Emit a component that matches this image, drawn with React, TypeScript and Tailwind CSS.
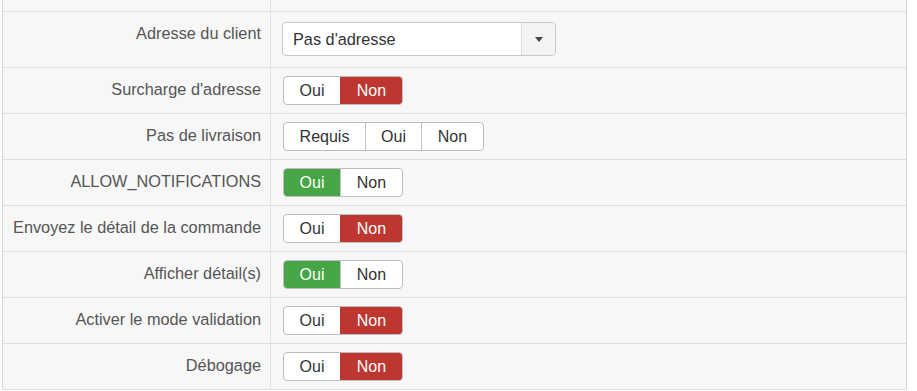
import React from 'react';

type Opt = { label: string; w: number; active?: 'red' | 'green' };

function Toggle({ options }: { options: Opt[] }) {
  return (
    <div className="flex h-[29px] rounded-[4px] border border-[#bdbdbd] overflow-hidden bg-white">
      {options.map((o, i) => (
        <div
          key={i}
          style={{ width: o.w }}
          className={
            'flex items-center justify-center text-[16px] ' +
            (i > 0 ? 'border-l border-[#c4c4c4] ' : '') +
            (o.active === 'red'
              ? 'bg-[#bd362f] text-white border-l-[#bd362f]'
              : o.active === 'green'
              ? 'bg-[#46a546] text-white'
              : 'text-[#333]')
          }
        >
          {o.label}
        </div>
      ))}
    </div>
  );
}

const ouiNon = (state: 'oui' | 'non'): Opt[] => [
  { label: 'Oui', w: 56, active: state === 'oui' ? 'green' : undefined },
  { label: 'Non', w: 62, active: state === 'non' ? 'red' : undefined },
];

const rows: { label: string; opts: Opt[] }[] = [
  { label: "Surcharge d'adresse", opts: ouiNon('non') },
  {
    label: 'Pas de livraison',
    opts: [
      { label: 'Requis', w: 81 },
      { label: 'Oui', w: 56 },
      { label: 'Non', w: 62 },
    ],
  },
  { label: 'ALLOW_NOTIFICATIONS', opts: ouiNon('oui') },
  { label: 'Envoyez le détail de la commande', opts: ouiNon('non') },
  { label: 'Afficher détail(s)', opts: ouiNon('oui') },
  { label: 'Activer le mode validation', opts: ouiNon('non') },
  { label: 'Débogage', opts: ouiNon('non') },
];

export default function App() {
  return (
    <div className="w-[917px] h-[391px] bg-white overflow-hidden font-['Liberation_Sans',Arial,sans-serif]">
      <div className="ml-[2px] w-[905px] border-l border-r border-[#d6d6d6] bg-[#f7f7f7]">
        <div className="grid grid-cols-[268px_1fr] h-[12px] border-b border-[#dedede]">
          <div className="border-r border-[#e2e2e2]" />
          <div />
        </div>

        <div className="grid grid-cols-[268px_1fr] h-[56px] border-b border-[#dedede]">
          <div className="border-r border-[#e2e2e2] text-right pr-[9px] pt-[12px] text-[16.3px] leading-[18px] text-[#555]">
            Adresse du client
          </div>
          <div className="pl-[11px] pt-[10px]">
            <div className="flex w-[274px] h-[34px] rounded-[4px] border border-[#c8c8c8] bg-white overflow-hidden">
              <div className="flex-1 flex items-center pl-[10px] text-[16.3px] text-[#333]">
                Pas d'adresse
              </div>
              <div className="w-[34px] flex items-center justify-center border-l border-[#dcdcdc] bg-[#f3f3f3]">
                <svg width="10" height="5" viewBox="0 0 10 5">
                  <path d="M1 0h8L5 5z" fill="#444" />
                </svg>
              </div>
            </div>
          </div>
        </div>

        {rows.map((r) => (
          <div key={r.label} className="grid grid-cols-[268px_1fr] h-[46px] border-b border-[#dedede]">
            <div className="border-r border-[#e2e2e2] flex items-center justify-end pr-[9px] pb-[3px] text-[16.3px] text-[#555]">
              {r.label}
            </div>
            <div className="pl-[12px] flex items-center">
              <Toggle options={r.opts} />
            </div>
          </div>
        ))}
      </div>
    </div>
  );
}
